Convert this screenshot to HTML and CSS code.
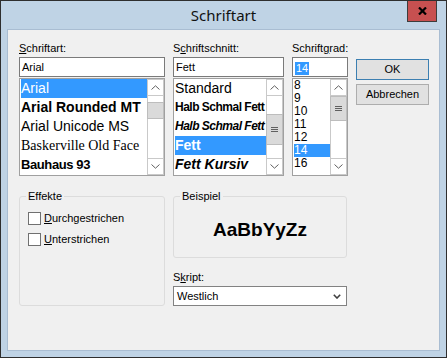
FILE: index.html
```html
<!DOCTYPE html>
<html lang="de">
<head>
    <meta charset="UTF-8">
    <meta name="viewport" content="width=device-width, initial-scale=1.0">
    <title>Schriftart</title>
    <link rel="stylesheet" href="styles.css">
</head>
<body>
    <div class="window">
        <div class="titlebar">
            <span></span>
            <div class="title">Schriftart</div>
            <div class="close">
                <svg width="9" height="8" viewBox="0 0 9 8"><path d="M1 0.5 L8 7.5 M8 0.5 L1 7.5" stroke="#000" stroke-width="2.2"/></svg>
            </div>
        </div>

        <div class="client">
            <div class="top">
                <!-- font name -->
                <div class="field">
                    <div class="lbl"><u>S</u>chriftart:</div>
                    <div class="edit">Arial</div>
                    <div class="list">
                        <div class="items">
                            <div class="item sel f-arial">Arial</div>
                            <div class="item f-rounded">Arial Rounded MT</div>
                            <div class="item f-arial">Arial Unicode MS</div>
                            <div class="item f-bask">Baskerville Old Face</div>
                            <div class="item f-bauhaus">Bauhaus 93</div>
                        </div>
                        <div class="scroll">
                            <div class="sbtn"><svg width="9" height="5" viewBox="0 0 9 5"><path d="M0.5 4.5 L4.5 0.8 L8.5 4.5" fill="none" stroke="#606060"/></svg></div>
                            <div class="track"><div class="thumb thumb-font"></div></div>
                            <div class="sbtn"><svg width="9" height="5" viewBox="0 0 9 5"><path d="M0.5 0.5 L4.5 4.2 L8.5 0.5" fill="none" stroke="#606060"/></svg></div>
                        </div>
                    </div>
                </div>

                <!-- font style -->
                <div class="field">
                    <div class="lbl">S<u>c</u>hriftschnitt:</div>
                    <div class="edit">Fett</div>
                    <div class="list">
                        <div class="items">
                            <div class="item f-arial">Standard</div>
                            <div class="item f-narrow">Halb Schmal Fett</div>
                            <div class="item f-narrow italic">Halb Schmal Fett</div>
                            <div class="item sel f-bold">Fett</div>
                            <div class="item f-bold italic">Fett Kursiv</div>
                        </div>
                        <div class="scroll">
                            <div class="sbtn"><svg width="9" height="5" viewBox="0 0 9 5"><path d="M0.5 4.5 L4.5 0.8 L8.5 4.5" fill="none" stroke="#606060"/></svg></div>
                            <div class="track"><div class="thumb thumb-style"><i></i><i></i><i></i></div></div>
                            <div class="sbtn"><svg width="9" height="5" viewBox="0 0 9 5"><path d="M0.5 0.5 L4.5 4.2 L8.5 0.5" fill="none" stroke="#606060"/></svg></div>
                        </div>
                    </div>
                </div>

                <!-- font size -->
                <div class="field">
                    <div class="lbl">Schrift<u>g</u>rad:</div>
                    <div class="edit"><span class="seltext">14</span></div>
                    <div class="list">
                        <div class="items small">
                            <div class="item">8</div>
                            <div class="item">9</div>
                            <div class="item">10</div>
                            <div class="item">11</div>
                            <div class="item">12</div>
                            <div class="item sel">14</div>
                            <div class="item">16</div>
                        </div>
                        <div class="scroll">
                            <div class="sbtn"><svg width="9" height="5" viewBox="0 0 9 5"><path d="M0.5 4.5 L4.5 0.8 L8.5 4.5" fill="none" stroke="#606060"/></svg></div>
                            <div class="track"><div class="thumb thumb-size"><i></i><i></i><i></i></div></div>
                            <div class="sbtn"><svg width="9" height="5" viewBox="0 0 9 5"><path d="M0.5 0.5 L4.5 4.2 L8.5 0.5" fill="none" stroke="#606060"/></svg></div>
                        </div>
                    </div>
                </div>

                <div class="buttons">
                    <div class="btn default">OK</div>
                    <div class="btn">Abbrechen</div>
                </div>
            </div>

            <div class="bottom">
                <fieldset class="group effects">
                    <legend>Effekte</legend>
                    <div class="group-body">
                        <div class="check"><span class="box"></span><span><u>D</u>urchgestrichen</span></div>
                        <div class="check"><span class="box"></span><span><u>U</u>nterstrichen</span></div>
                    </div>
                </fieldset>

                <div class="right">
                    <fieldset class="group sample">
                        <legend>Beispiel</legend>
                        <div class="sample-text">AaBbYyZz</div>
                    </fieldset>
                    <div class="lbl">S<u>k</u>ript:</div>
                    <div class="combo">
                        <span>Westlich</span>
                        <svg width="8" height="5" viewBox="0 0 8 5"><path d="M0.8 0.8 L4 4 L7.2 0.8" fill="none" stroke="#404040" stroke-width="1.6"/></svg>
                    </div>
                </div>
            </div>
        </div>
    </div>
</body>
</html>
```

FILE: styles.css
```css
body {
    margin: 0;
    font-family: "Liberation Sans", Arial, sans-serif;
    font-size: 11px;
    color: #000;
}

.window {
    width: 447px;
    height: 358px;
    box-sizing: border-box;
    border: 1px solid #2e2e2e;
    background: #bfd3e5;
}

/* title bar */
.titlebar {
    height: 29px;
    display: grid;
    grid-template-columns: 1fr auto 1fr;
    align-items: start;
}

.title {
    font-family: "Noto Sans", sans-serif;
    font-size: 15px;
    line-height: 29px;
    color: #111;
}

.close {
    justify-self: end;
    margin-right: 9px;
    width: 30px;
    height: 21px;
    box-sizing: border-box;
    background: #c75050;
    border: 1px solid #3c3c3c;
    border-top: none;
    display: flex;
    align-items: center;
    justify-content: center;
}

/* client area */
.client {
    margin: 0 7px;
    height: 320px;
    box-sizing: border-box;
    padding: 12px 0 0 11px;
    background: #f0f0f0;
    box-shadow: 0 0 0 1px #a9bdd2;
}

.top {
    display: grid;
    grid-template-columns: 146px 111px 56px 73px;
    column-gap: 8px;
}

.lbl {
    height: 13px;
    line-height: 13px;
    margin-bottom: 2px;
    white-space: nowrap;
}

.edit {
    height: 20px;
    box-sizing: border-box;
    border: 1px solid #7a7a7a;
    background: #fff;
    padding: 0 2px;
    line-height: 18px;
    margin-bottom: 1px;
}

.seltext {
    display: inline-block;
    line-height: 13px;
    padding: 0 1px;
    background: #3399ff;
    color: #fff;
    vertical-align: middle;
}

.list {
    height: 98px;
    box-sizing: border-box;
    border: 1px solid #a0a0a0;
    background: #fff;
    display: flex;
}

.items {
    flex: 1;
    min-width: 0;
    padding-left: 1px;
    overflow: hidden;
}

.item {
    height: 19px;
    line-height: 19px;
    white-space: nowrap;
    overflow: hidden;
}

.item.sel {
    background: #3399ff;
    color: #fff;
}

.items.small .item {
    height: 13px;
    line-height: 13px;
    font-size: 12px;
}

.f-arial { font-size: 14px; }
.f-rounded { font-size: 14px; font-weight: bold; }
.f-bask { font-family: "Liberation Serif", serif; font-size: 14px; }
.f-bauhaus { font-size: 13px; font-weight: 900; letter-spacing: -0.4px; }
.f-narrow { font-size: 12px; font-weight: bold; letter-spacing: -0.5px; }
.f-bold { font-size: 14px; font-weight: bold; }
.italic { font-style: italic; }

/* scrollbars */
.scroll {
    width: 17px;
    display: flex;
    flex-direction: column;
}

.sbtn {
    height: 17px;
    box-sizing: border-box;
    border: 1px solid #c9c9c9;
    display: flex;
    align-items: center;
    justify-content: center;
}

.track {
    flex: 1;
    border-left: 1px solid #c9c9c9;
    border-right: 1px solid #c9c9c9;
}

.thumb {
    box-sizing: border-box;
    background: #dadada;
    border: 1px solid #bdbdbd;
    margin: 0 -1px;
    display: flex;
    flex-direction: column;
    align-items: center;
    justify-content: center;
    gap: 1px;
}

.thumb i {
    display: block;
    width: 7px;
    height: 1px;
    background: #606060;
}

.thumb-font { margin-top: 6px; height: 17px; }
.thumb-style { margin-top: 18px; height: 31px; }
.thumb-size { margin-top: 0; height: 25px; }

/* buttons */
.buttons {
    padding-top: 17px;
    display: flex;
    flex-direction: column;
    gap: 4px;
}

.btn {
    height: 21px;
    box-sizing: border-box;
    border: 1px solid #adadad;
    background: #e1e1e1;
    line-height: 19px;
    text-align: center;
}

.btn.default {
    border-color: #3c7fb1;
}

/* lower half */
.bottom {
    margin-top: 14px;
    display: grid;
    grid-template-columns: 146px 174px;
    column-gap: 8px;
}

.group {
    margin: 0;
    padding: 0;
    border: 1px solid #dcdcdc;
    border-radius: 3px;
    box-sizing: border-box;
}

.group legend {
    margin-left: 6px;
    padding: 0 2px;
    line-height: 13px;
}

.effects {
    height: 116px;
}

.group-body {
    padding: 9px 8px 0;
}

.check {
    display: flex;
    align-items: center;
    gap: 3px;
    height: 13px;
    line-height: 13px;
    margin-bottom: 8px;
}

.box {
    width: 13px;
    height: 13px;
    box-sizing: border-box;
    border: 1px solid #707070;
    background: #fff;
}

.sample {
    height: 68px;
    display: flex;
    justify-content: center;
}

.sample-text {
    font-size: 19px;
    font-weight: bold;
    line-height: 22px;
    text-align: center;
    padding-top: 16px;
}

.right .lbl {
    margin-top: 13px;
}

.combo {
    height: 20px;
    box-sizing: border-box;
    border: 1px solid #828282;
    background: #fff;
    padding: 0 5px 0 3px;
    display: flex;
    align-items: center;
    justify-content: space-between;
}
```
